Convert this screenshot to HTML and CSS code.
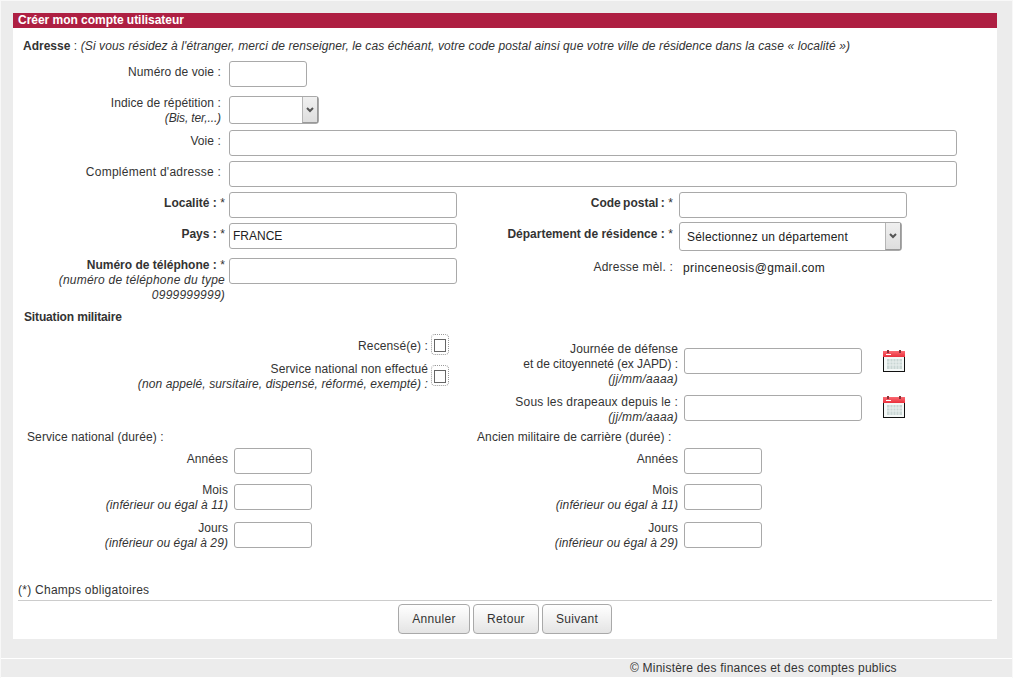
FILE: index.html
```html
<!DOCTYPE html>
<html lang="fr">
<head>
    <meta charset="UTF-8">
    <meta name="viewport" content="width=device-width, initial-scale=1.0">
    <title>Créer mon compte utilisateur</title>
    <link rel="stylesheet" href="styles.css">
</head>
<body>
    <svg class="svg-defs" width="0" height="0">
        <defs>
            <linearGradient id="calHead" x1="0" y1="0" x2="0" y2="1">
                <stop offset="0" stop-color="#fb6a72"/>
                <stop offset="1" stop-color="#e9303c"/>
            </linearGradient>
            <symbol id="calendar" viewBox="0 0 22 22">
                <rect x="0" y="7" width="22" height="15" fill="#111"/>
                <rect x="0" y="1" width="22" height="6" fill="url(#calHead)"/>
                <rect x="1" y="7" width="20" height="14" fill="#f4f8f7"/>
                <rect x="4" y="0" width="2" height="3" fill="#8a3238"/>
                <rect x="16" y="0" width="2" height="3" fill="#8a3238"/>
                <rect x="3" y="4" width="5" height="1" fill="#fff"/>
                <rect x="4" y="9" width="15" height="10" fill="#c9d6d4"/>
                <path d="M7 9v10M10 9v10M13 9v10M16 9v10M4 12h15M4 15h15" stroke="#eaf0ef" stroke-width="1"/>
            </symbol>
        </defs>
    </svg>

    <div class="page">
        <form class="panel">
            <h1 class="panel-title">Créer mon compte utilisateur</h1>

            <p class="note"><b>Adresse</b> : <i>(Si vous résidez à l'étranger, merci de renseigner, le cas échéant, votre code postal ainsi que votre ville de résidence dans la case « localité »)</i></p>

            <div class="row row-numero">
                <label class="lbl lbl-mid" for="numero">Numéro de voie :</label>
                <input class="inp inp-s" type="text" id="numero">
            </div>

            <div class="row row-indice">
                <label class="lbl" for="indice">Indice de répétition :<br><i class="hint-tight">(Bis, ter,...)</i></label>
                <div class="select-box select-s">
                    <select id="indice"><option></option></select>
                    <span class="select-arrow"><svg width="8" height="6" viewBox="0 0 8 6"><path d="M1 1l3 3 3-3" fill="none" stroke="#555" stroke-width="2"/></svg></span>
                </div>
            </div>

            <div class="row row-gap4">
                <label class="lbl lbl-mid" for="voie">Voie :</label>
                <input class="inp inp-l" type="text" id="voie">
            </div>

            <div class="row row-gap5">
                <label class="lbl lbl-mid lbl-wide" for="complement">Complément d'adresse :</label>
                <input class="inp inp-l" type="text" id="complement">
            </div>

            <div class="row row-gap5">
                <div class="half half-left">
                    <label class="lbl lbl-mid" for="localite"><b>Localité :</b> *</label>
                    <input class="inp inp-m" type="text" id="localite">
                </div>
                <div class="half half-right">
                    <label class="lbl lbl-mid" for="cp"><b class="tight-words">Code postal :</b> *</label>
                    <input class="inp inp-m" type="text" id="cp">
                </div>
            </div>

            <div class="row row-gap5">
                <div class="half half-left">
                    <label class="lbl lbl-mid" for="pays"><b>Pays :</b> *</label>
                    <input class="inp inp-m" type="text" id="pays" value="FRANCE">
                </div>
                <div class="half half-right">
                    <label class="lbl lbl-mid" for="dept"><b>Département de résidence :</b> *</label>
                    <div class="select-box select-l">
                        <select id="dept"><option>Sélectionnez un département</option></select>
                        <span class="select-arrow"><svg width="8" height="6" viewBox="0 0 8 6"><path d="M1 1l3 3 3-3" fill="none" stroke="#555" stroke-width="2"/></svg></span>
                    </div>
                </div>
            </div>

            <div class="row row-phone">
                <div class="half half-left">
                    <label class="lbl" for="tel"><b>Numéro de téléphone :</b> *<br><i>(numéro de téléphone du type 0999999999)</i></label>
                    <input class="inp inp-m" type="text" id="tel">
                </div>
                <div class="half half-right">
                    <span class="lbl lbl-mail">Adresse mèl. :</span>
                    <span class="mail">princeneosis@gmail.com</span>
                </div>
            </div>

            <h2 class="section-title">Situation militaire</h2>

            <div class="military">
                <div class="military-left">
                    <div class="check-row">
                        <label class="check-lbl" for="recense">Recensé(e) :</label>
                        <span class="check-focus"><input type="checkbox" id="recense"></span>
                    </div>
                    <div class="check-row check-row-second">
                        <label class="check-lbl check-lbl-top" for="nonfait">Service national non effectué<br><i>(non appelé, sursitaire, dispensé, réformé, exempté) :</i></label>
                        <span class="check-focus check-focus-second"><input type="checkbox" id="nonfait"></span>
                    </div>
                </div>
                <div class="military-right">
                    <div class="date-row">
                        <label class="date-lbl" for="japd">Journée de défense<br><span class="lbl-tight">et de citoyenneté (ex JAPD) :</span><br><i class="date-hint">(jj/mm/aaaa)</i></label>
                        <input class="inp inp-date inp-date-first" type="text" id="japd">
                        <svg class="cal cal-first" width="22" height="22"><use href="#calendar"/></svg>
                    </div>
                    <div class="date-row date-row-second">
                        <label class="date-lbl" for="drapeaux"><span class="lbl-drapeaux">Sous les drapeaux depuis le :</span><br><i class="date-hint">(jj/mm/aaaa)</i></label>
                        <input class="inp inp-date inp-date-second" type="text" id="drapeaux">
                        <svg class="cal cal-second" width="22" height="22"><use href="#calendar"/></svg>
                    </div>
                </div>
            </div>

            <div class="durations">
                <div class="duration">
                    <div class="duration-title">Service national (durée) :</div>
                    <div class="dur-row">
                        <label class="dur-lbl dur-lbl-mid">Années</label>
                        <input class="inp inp-s" type="text">
                    </div>
                    <div class="dur-row dur-row-mois">
                        <label class="dur-lbl">Mois<br><i>(inférieur ou égal à 11)</i></label>
                        <input class="inp inp-s inp-down" type="text">
                    </div>
                    <div class="dur-row dur-row-jours">
                        <label class="dur-lbl">Jours<br><i>(inférieur ou égal à 29)</i></label>
                        <input class="inp inp-s inp-down" type="text">
                    </div>
                </div>
                <div class="duration">
                    <div class="duration-title">Ancien militaire de carrière (durée) :</div>
                    <div class="dur-row">
                        <label class="dur-lbl dur-lbl-mid">Années</label>
                        <input class="inp inp-s" type="text">
                    </div>
                    <div class="dur-row dur-row-mois">
                        <label class="dur-lbl">Mois<br><i>(inférieur ou égal à 11)</i></label>
                        <input class="inp inp-s inp-down" type="text">
                    </div>
                    <div class="dur-row dur-row-jours">
                        <label class="dur-lbl">Jours<br><i>(inférieur ou égal à 29)</i></label>
                        <input class="inp inp-s inp-down" type="text">
                    </div>
                </div>
            </div>

            <p class="required">(*) Champs obligatoires</p>

            <div class="actions">
                <button type="button" class="btn btn-cancel">Annuler</button>
                <button type="button" class="btn btn-back">Retour</button>
                <button type="submit" class="btn btn-next">Suivant</button>
            </div>
        </form>
    </div>

    <footer class="footer">© Ministère des finances et des comptes publics</footer>
</body>
</html>
```

FILE: styles.css
```css
html {
    background-color: #ececec;
}

body {
    margin: 0;
    border: 1px solid #f8f8f8;
    border-bottom: none;
    font-family: "Liberation Sans", Arial, sans-serif;
    font-size: 12px;
    line-height: 15px;
    letter-spacing: 0.1px;
    color: #333333;
    background-color: #ececec;
}

b {
    letter-spacing: 0;
}

.svg-defs {
    display: block;
    height: 0;
}

.page {
    padding: 12px 15px 0 12px;
}

.panel {
    display: block;
    width: 984px;
    height: 626px;
    background-color: #ffffff;
}

.panel-title {
    margin: 0;
    padding-left: 5px;
    height: 15px;
    font-size: 12px;
    line-height: 15px;
    font-weight: bold;
    letter-spacing: -0.03px;
    color: #ffffff;
    background-color: #ae1f42;
}

.note {
    margin: 11px 0 0;
    padding-left: 10px;
}

/* rows */
.row {
    display: flex;
}

.row-numero {
    margin-top: 7px;
}

.row-indice {
    margin-top: 9px;
    height: 30px;
}

.row-gap4 {
    margin-top: 4px;
}

.row-gap5 {
    margin-top: 5px;
}

.row-phone {
    margin-top: 7px;
    height: 45px;
}

.half {
    display: flex;
    width: 450px;
    flex: none;
}

.lbl {
    flex: none;
    width: 208px;
    margin-right: 8px;
    text-align: right;
}

.lbl-wide {
    letter-spacing: 0.25px;
}

.lbl-tight {
    letter-spacing: -0.05px;
}

.lbl-drapeaux {
    letter-spacing: 0.18px;
}

.hint-tight {
    letter-spacing: -0.13px;
}

.date-hint {
    letter-spacing: 0.25px;
}

.tight-words {
    word-spacing: -1px;
}

.half-left .lbl {
    width: 212px;
    margin-right: 4px;
}

.half-left .lbl i {
    letter-spacing: 0.22px;
}

.half-right .lbl {
    width: 210px;
    margin-right: 6px;
}

.lbl-mid {
    padding-top: 4px;
}

.half-right .lbl-mail {
    padding-top: 2px;
    letter-spacing: 0.2px;
}

.mail {
    padding-top: 3px;
    padding-left: 4px;
    letter-spacing: 0.36px;
    color: #222222;
}

/* fields */
.inp {
    flex: none;
    box-sizing: border-box;
    height: 26px;
    padding: 0 3px;
    border: 1px solid #a9a9a9;
    border-radius: 3px;
    font-family: inherit;
    font-size: 12px;
    color: #222222;
    background-color: #ffffff;
}

.inp-s {
    width: 78px;
}

.inp-m {
    width: 228px;
}

.inp-l {
    width: 728px;
}

.inp-date {
    width: 178px;
}

.select-box {
    position: relative;
    flex: none;
    box-sizing: border-box;
    border: 1px solid #a9a9a9;
    border-radius: 3px;
    background-color: #ffffff;
}

.select-s {
    width: 90px;
    height: 28px;
}

.select-l {
    width: 223px;
    height: 29px;
    margin-top: -1px;
}

.select-box select {
    display: block;
    width: 100%;
    height: 100%;
    padding: 0 20px 0 7px;
    border: none;
    background: transparent;
    font-family: inherit;
    font-size: 12px;
    letter-spacing: 0.18px;
    color: #222222;
    appearance: none;
    -webkit-appearance: none;
}

.select-arrow {
    position: absolute;
    top: 0;
    right: 0;
    bottom: 0;
    width: 16px;
    display: flex;
    align-items: center;
    justify-content: center;
    border-left: 1px solid #b5b5b5;
    border-right: 1px solid #999999;
    border-bottom: 1px solid #999999;
    background: linear-gradient(#f0f0f0, #dedede);
    box-sizing: border-box;
    pointer-events: none;
}

/* situation militaire */
.section-title {
    margin: 7px 0 0;
    padding-left: 11px;
    font-size: 12px;
    line-height: 15px;
    font-weight: bold;
    letter-spacing: -0.15px;
}

.military {
    display: flex;
}

.military-left {
    flex: none;
    width: 436px;
    padding-top: 9px;
}

.check-row {
    display: flex;
    justify-content: flex-end;
}

.check-row-second {
    margin-top: 7px;
}

.check-lbl {
    padding-top: 5px;
    padding-right: 3px;
    text-align: right;
}

.check-lbl-top {
    padding-top: 0;
}

.check-focus {
    display: flex;
    align-items: flex-end;
    box-sizing: border-box;
    width: 18px;
    height: 21px;
    padding: 0 2px 2px;
    border: 1px dotted #999999;
    border-radius: 4px;
}

.check-focus-second {
    margin-top: 3px;
}

.check-focus input {
    width: 13px;
    height: 13px;
    margin: 0;
    border: 1px solid #666666;
    background-color: #ffffff;
    appearance: none;
    -webkit-appearance: none;
}

.military-right {
    flex: none;
    width: 548px;
    padding-top: 16px;
}

.date-row {
    display: flex;
    height: 45px;
}

.date-row-second {
    margin-top: 8px;
    height: 30px;
}

.date-lbl {
    flex: none;
    width: 229px;
    margin-right: 6px;
    padding-top: 1px;
    text-align: right;
}

.inp-date-first {
    margin-top: 7px;
}

.inp-date-second {
    margin-top: 1px;
}

.cal {
    flex: none;
    margin-left: 21px;
}

.cal-first {
    margin-top: 9px;
}

.cal-second {
    margin-top: 2px;
}

/* durees */
.durations {
    display: flex;
    margin-top: 6px;
}

.duration {
    flex: none;
    width: 450px;
}

.duration-title {
    padding-left: 14px;
    margin-bottom: 3px;
}

.dur-row {
    display: flex;
}

.dur-row-mois {
    margin-top: 9px;
    height: 30px;
}

.dur-row-jours {
    margin-top: 8px;
    height: 30px;
}

.dur-lbl {
    flex: none;
    width: 215px;
    margin-right: 6px;
    text-align: right;
}

.dur-lbl-mid {
    padding-top: 4px;
}

.inp-down {
    margin-top: 1px;
}

/* bas de page */
.required {
    margin: 32px 0 0;
    padding-left: 5px;
    letter-spacing: 0.26px;
}

.actions {
    display: flex;
    justify-content: center;
    gap: 3px;
    margin: 2px 5px 0;
    padding-top: 3px;
    border-top: 1px solid #cccccc;
}

.btn {
    box-sizing: border-box;
    height: 30px;
    padding: 0;
    border: 1px solid #a9a9a9;
    border-radius: 4px;
    font-family: inherit;
    font-size: 12px;
    letter-spacing: 0.3px;
    color: #333333;
    background: linear-gradient(#ffffff, #e4e4e4);
}

.btn-cancel {
    width: 72px;
}

.btn-back {
    width: 66px;
}

.btn-next {
    width: 70px;
}

.footer {
    margin-top: 19px;
    height: 18px;
    padding-left: 629px;
    border-top: 1px solid #ffffff;
    border-bottom: 1px solid #ffffff;
    line-height: 19px;
    letter-spacing: 0.21px;
    color: #333333;
    background-color: #ececec;
}
```
